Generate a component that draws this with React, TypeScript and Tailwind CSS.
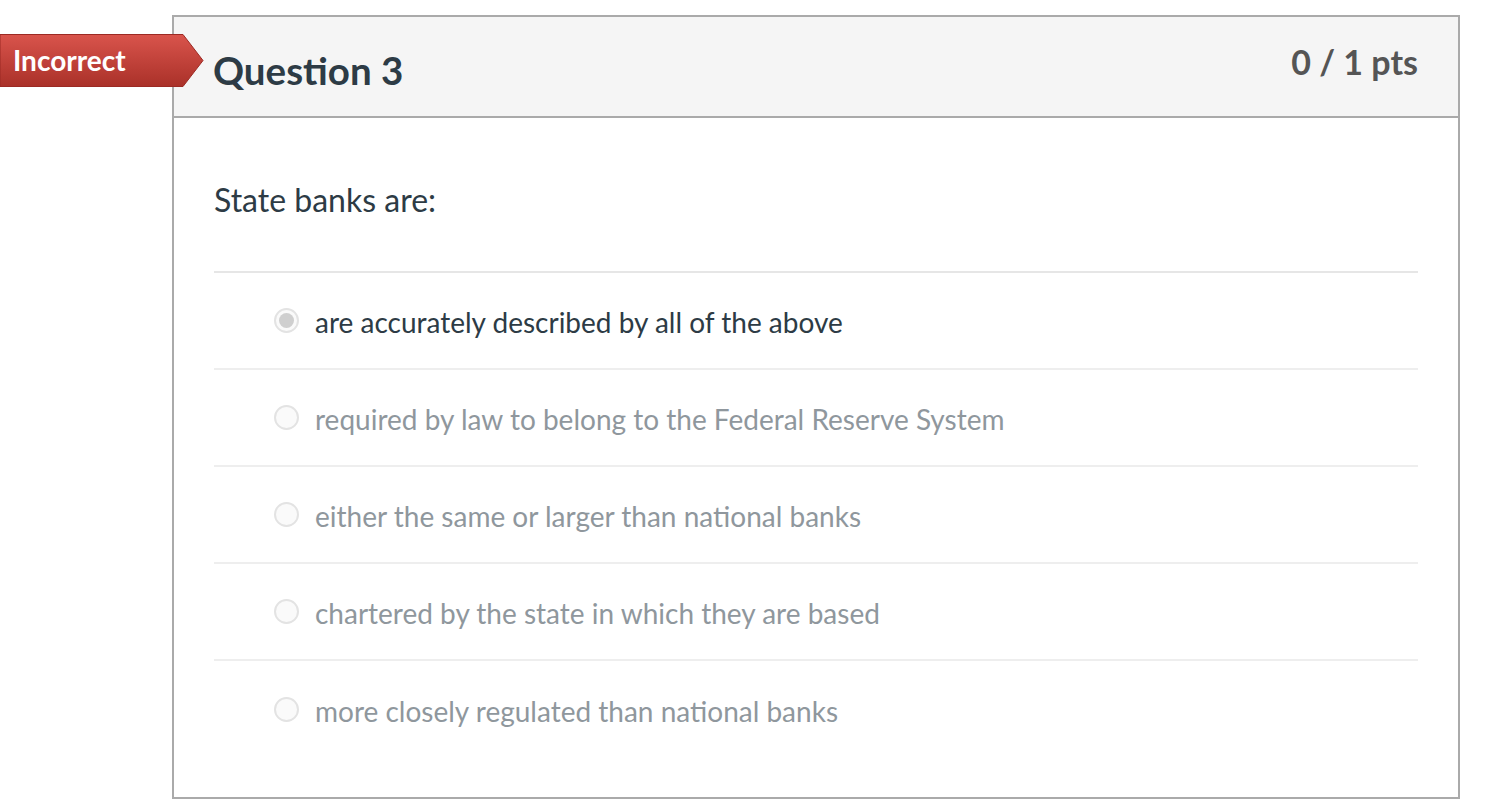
import React from 'react';

type Answer = {
  text: string;
  selected?: boolean;
};

const answers: Answer[] = [
  { text: 'are accurately described by all of the above', selected: true },
  { text: 'required by law to belong to the Federal Reserve System' },
  { text: 'either the same or larger than national banks' },
  { text: 'chartered by the state in which they are based' },
  { text: 'more closely regulated than national banks' },
];

const Radio: React.FC<{ checked?: boolean }> = ({ checked }) => (
  <span className="flex h-[25px] w-[25px] shrink-0 items-center justify-center rounded-full border-2 border-[#e3e3e3] bg-[#fafafa]">
    {checked && <span className="h-[15px] w-[15px] rounded-full bg-[#cfcfcf]" />}
  </span>
);

const IncorrectBadge = () => (
  <div className="absolute left-0 top-[34px] h-[53px] w-[204px]">
    <svg width="204" height="53" viewBox="0 0 204 53" className="absolute inset-0">
      <defs>
        <linearGradient id="badge" x1="0" y1="0" x2="0" y2="1">
          <stop offset="0" stopColor="#d9544c" />
          <stop offset="1" stopColor="#aa3129" />
        </linearGradient>
      </defs>
      <path d="M0 0.5 H183 L203 26.5 L183 52.5 H0 Z" fill="url(#badge)" stroke="#9c2a24" strokeWidth="1" />
    </svg>
    <span className="relative block pl-[13px] pt-[11px] text-[28px] font-bold leading-[30px] text-white">
      Incorrect
    </span>
  </div>
);

export default function App() {
  return (
    <div className="relative min-h-[800px] bg-white pt-[15px] font-['Lato','Open_Sans',sans-serif] text-[#2d3b45]">
      <div className="ml-[172px] w-[1288px] border-2 border-[#aaaaaa]">
        <div className="flex h-[101px] items-start justify-between border-b-2 border-[#aaaaaa] bg-[#f5f5f5] pl-[39px] pr-[40px]">
          <h2 className="pt-[33px] text-[38.5px] font-bold leading-[40px] text-[#2d3b45]">Question 3</h2>
          <div className="pt-[27px] text-[34px] font-bold leading-[36px] text-[#555555]">0 / 1 pts</div>
        </div>
        <div className="px-[40px] pb-[39px]">
          <p className="border-b-2 border-[#e6e6e6] pb-[52px] pt-[63px] text-[32px] leading-[38px]">
            State banks are:
          </p>
          {answers.map((a, i) => (
            <div
              key={i}
              className={`flex h-[97px] items-center gap-[16px] pl-[60px] ${
                i < answers.length - 1 ? 'border-b-2 border-[#eeeeee]' : ''
              }`}
            >
              <Radio checked={a.selected} />
              <span
                className={`pt-[3px] text-[28px] leading-[32px] ${
                  a.selected ? 'text-[#2d3b45]' : 'text-[#8f979d]'
                }`}
              >
                {a.text}
              </span>
            </div>
          ))}
        </div>
      </div>
      <IncorrectBadge />
    </div>
  );
}
